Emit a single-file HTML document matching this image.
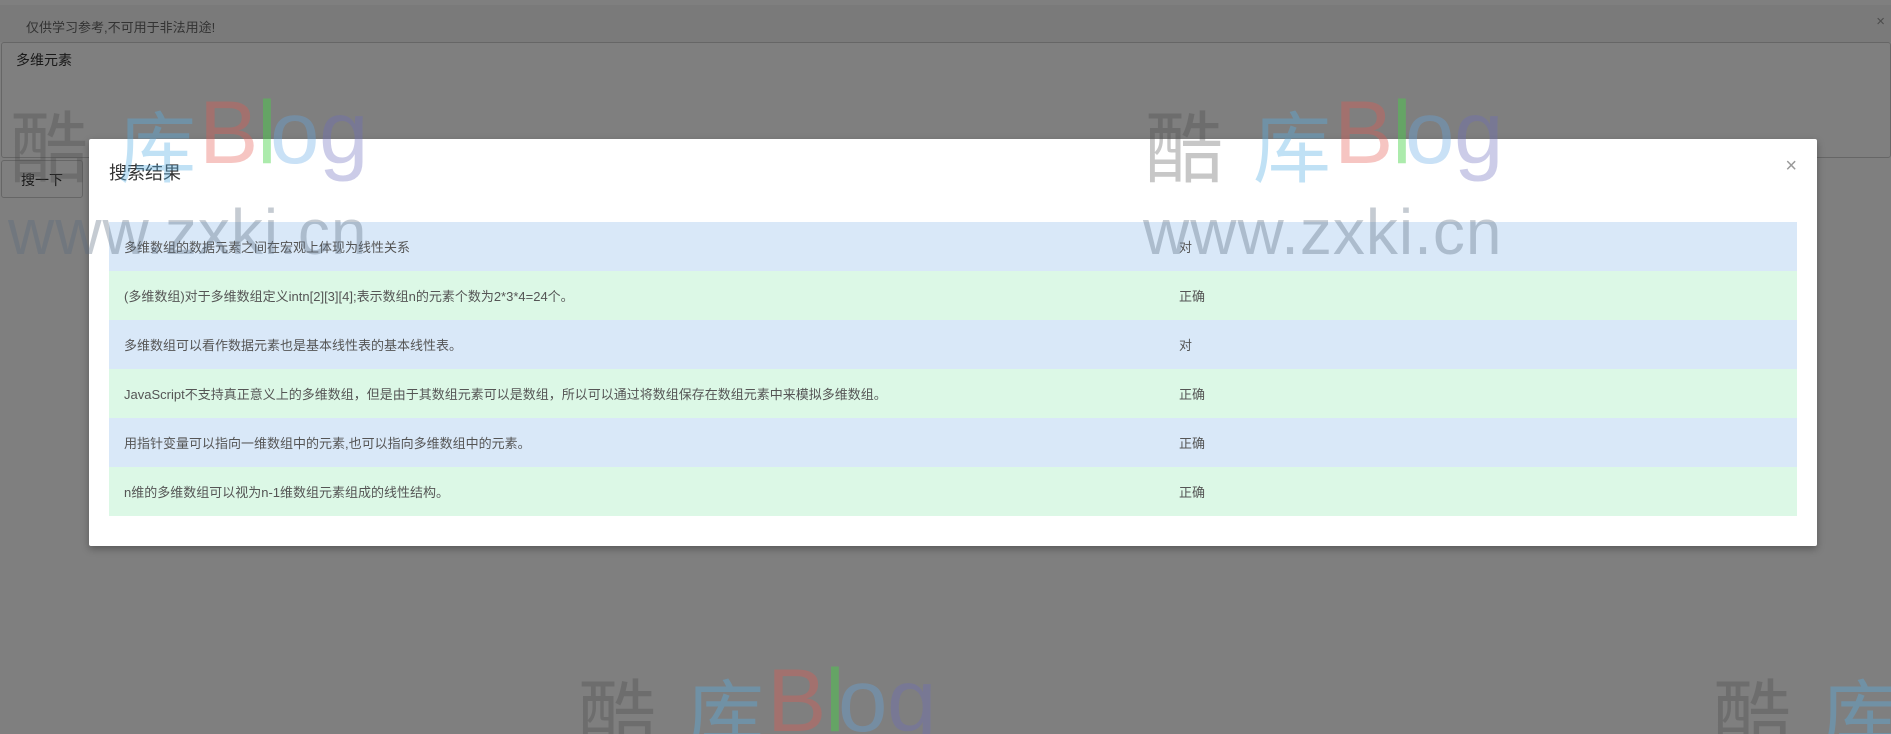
<!DOCTYPE html>
<html><head><meta charset="utf-8"><style>
*{margin:0;padding:0;box-sizing:border-box}
html{width:1891px;height:734px;overflow:hidden}
body{width:1891px;height:734px;overflow:hidden;position:relative;background:#fff;font-family:"Liberation Sans","Noto Sans CJK SC",sans-serif;color:#333}
#clip{position:absolute;left:0;top:0;width:1891px;height:734px;overflow:hidden}
.topbar{position:absolute;left:0;top:5px;width:1891px;height:37px;background:#f5f5f5;font-size:13px;color:#666;padding:12px 0 0 26px}
.topbar .x{position:absolute;right:6px;top:8px;color:#999;font-size:15px}
.ta{position:absolute;left:1px;top:42px;width:1890px;height:116px;border:1px solid #ccc;border-radius:3px;font-size:14px;padding:7px 14px}
.btn{position:absolute;left:1px;top:160px;width:82px;height:38px;border:1px solid #ccc;border-radius:3px;font-size:14px;text-align:center;line-height:38px}
.ov{position:absolute;left:0;top:0;width:1891px;height:734px;background:rgba(0,0,0,.5)}
.modal{position:absolute;left:89px;top:139px;width:1728px;height:407px;background:#fff;box-shadow:0 3px 8px rgba(0,0,0,.3);border-radius:2px}
.modal h3{position:absolute;left:20px;top:20px;font-size:18px;font-weight:normal;color:#333}
.modal .cl{position:absolute;right:20px;top:16px;font-size:20px;color:#999}
table{position:absolute;left:20px;top:83px;width:1688px;border-collapse:collapse;font-size:13px;color:#555}
td{height:49px;padding:0 0 0 15px}
tr.a{background:#d9e8f8}tr.b{background:#dcf8e6}
td.c2{width:633px}
.wm{position:absolute;pointer-events:none;white-space:nowrap;width:380px;height:180px}
.wm span{position:absolute;line-height:1}
.wm .cj{font-family:"Noto Sans CJK SC",sans-serif;font-size:78px;top:12px}
.wm .lt{font-size:89px;top:-4px}
.wm .l2{position:absolute;left:0;top:108px;font-size:64px;line-height:64px;color:rgba(90,105,125,.35);letter-spacing:1px}
</style></head><body><div id="clip">
<div class="topbar">仅供学习参考,不可用于非法用途!<span class="x">×</span></div>
<div class="ta">多维元素</div>
<div class="btn">搜一下</div>
<div class="ov"></div>
<div class="modal">
<h3>搜索结果</h3><span class="cl">×</span>
<table>
<tr class="a"><td>多维数组的数据元素之间在宏观上体现为线性关系</td><td class="c2">对</td></tr>
<tr class="b"><td>(多维数组)对于多维数组定义intn[2][3][4];表示数组n的元素个数为2*3*4=24个。</td><td class="c2">正确</td></tr>
<tr class="a"><td>多维数组可以看作数据元素也是基本线性表的基本线性表。</td><td class="c2">对</td></tr>
<tr class="b"><td>JavaScript不支持真正意义上的多维数组，但是由于其数组元素可以是数组，所以可以通过将数组保存在数组元素中来模拟多维数组。</td><td class="c2">正确</td></tr>
<tr class="a"><td>用指针变量可以指向一维数组中的元素,也可以指向多维数组中的元素。</td><td class="c2">正确</td></tr>
<tr class="b"><td>n维的多维数组可以视为n-1维数组元素组成的线性结构。</td><td class="c2">正确</td></tr>
</table>
</div>
<div class="wm" style="left:8px;top:92px"><span class="cj" style="left:2px;color:rgba(70,70,70,.3)">酷</span><span class="cj" style="left:110px;color:rgba(90,175,230,.38)">库</span><span class="lt" style="left:191px;color:rgba(230,90,80,.35)">B</span><span class="lt" style="left:249px;color:rgba(70,210,70,.45)">l</span><span class="lt" style="left:262px;color:rgba(100,170,230,.35)">o</span><span class="lt" style="left:311px;color:rgba(110,110,190,.35)">g</span><div class="l2">www.zxki.cn</div></div>
<div class="wm" style="left:1143px;top:92px"><span class="cj" style="left:2px;color:rgba(70,70,70,.3)">酷</span><span class="cj" style="left:110px;color:rgba(90,175,230,.38)">库</span><span class="lt" style="left:191px;color:rgba(230,90,80,.35)">B</span><span class="lt" style="left:249px;color:rgba(70,210,70,.45)">l</span><span class="lt" style="left:262px;color:rgba(100,170,230,.35)">o</span><span class="lt" style="left:311px;color:rgba(110,110,190,.35)">g</span><div class="l2">www.zxki.cn</div></div>
<div class="wm" style="left:576px;top:660px"><span class="cj" style="left:2px;color:rgba(70,70,70,.3)">酷</span><span class="cj" style="left:110px;color:rgba(90,175,230,.38)">库</span><span class="lt" style="left:191px;color:rgba(230,90,80,.35)">B</span><span class="lt" style="left:249px;color:rgba(70,210,70,.45)">l</span><span class="lt" style="left:262px;color:rgba(100,170,230,.35)">o</span><span class="lt" style="left:311px;color:rgba(110,110,190,.35)">g</span></div>
<div class="wm" style="left:1711px;top:660px"><span class="cj" style="left:2px;color:rgba(70,70,70,.3)">酷</span><span class="cj" style="left:110px;color:rgba(90,175,230,.38)">库</span><span class="lt" style="left:191px;color:rgba(230,90,80,.35)">B</span><span class="lt" style="left:249px;color:rgba(70,210,70,.45)">l</span><span class="lt" style="left:262px;color:rgba(100,170,230,.35)">o</span><span class="lt" style="left:311px;color:rgba(110,110,190,.35)">g</span></div>
</div></body></html>
